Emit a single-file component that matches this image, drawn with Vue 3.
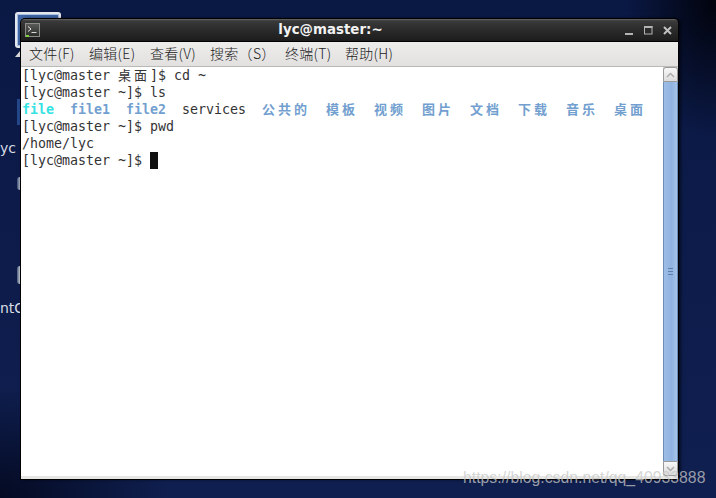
<script setup>
const menus = [
  { t: '文件(F)', w: 60 },
  { t: '编辑(E)', w: 61 },
  { t: '查看(V)', w: 60 },
  { t: '搜索（S）', w: 75 },
  { t: '终端(T)', w: 60 },
  { t: '帮助(H)', w: 60 }
]
</script>

<template>
  <div class="desktop">
    <div class="selected-icon"><div class="selected-inner"></div></div>
    <div class="blob b1"></div>
    <div class="blob b2"></div>
    <div class="blob b3"></div>
    <div class="blob b4"></div>
    <span class="dlabel l1">yc</span>
    <span class="dlabel l2">ntO</span>

    <section class="window">
      <header class="titlebar">
        <svg class="term-icon" width="15" height="14" viewBox="0 0 15 14">
          <defs>
            <linearGradient id="ti" x1="0" y1="0" x2="0" y2="1">
              <stop offset="0" stop-color="#5a5d5a" />
              <stop offset="1" stop-color="#2a2c2a" />
            </linearGradient>
          </defs>
          <rect x="0.5" y="0.5" width="14" height="13" fill="url(#ti)" stroke="#8b8d89" />
          <path d="M3 3.5l3 2.5-3 2.5" fill="none" stroke="#e8e8e8" stroke-width="1" />
          <path d="M6.5 9.5h5" stroke="#d8d8d8" stroke-width="1" />
          <rect x="1" y="12" width="3" height="2" fill="#7fd13b" />
        </svg>
        <span class="title">lyc@master:~</span>
        <div class="controls">
          <svg width="9" height="9" viewBox="0 0 9 9"><rect x="0" y="7" width="8" height="2" fill="#b4b4b4" /></svg>
          <svg width="9" height="9" viewBox="0 0 9 9"><rect x="0.5" y="0.5" width="7.5" height="7.5" fill="none" stroke="#b4b4b4" stroke-width="1" /><rect x="0" y="0" width="8.5" height="2" fill="#b4b4b4" /></svg>
          <svg width="9" height="9" viewBox="0 0 9 9"><path d="M1 1l7 7M8 1L1 8" stroke="#c0c0c0" stroke-width="2" /></svg>
        </div>
      </header>

      <nav class="menubar">
        <span v-for="m in menus" :key="m.t" class="menu" :style="{ width: m.w + 'px' }">{{ m.t }}</span>
      </nav>

      <div class="body">
        <pre class="terminal"><span>[lyc@master <i class="wide">桌面</i>]$ cd ~</span>
<span>[lyc@master ~]$ ls</span>
<b class="cyan">file</b>  <b class="blue">file1</b>  <b class="blue">file2</b>  <span>services</span>  <b class="blue"><i class="wide">公共的</i></b>  <b class="blue"><i class="wide">模板</i></b>  <b class="blue"><i class="wide">视频</i></b>  <b class="blue"><i class="wide">图片</i></b>  <b class="blue"><i class="wide">文档</i></b>  <b class="blue"><i class="wide">下载</i></b>  <b class="blue"><i class="wide">音乐</i></b>  <b class="blue"><i class="wide">桌面</i></b>
<span>[lyc@master ~]$ pwd</span>
<span>/home/lyc</span>
<span>[lyc@master ~]$ <i class="cursor"></i></span></pre>
        <aside class="scrollbar">
          <div class="sb-btn top">
            <svg width="9" height="6" viewBox="0 0 9 6"><path d="M1 5l3.5-3.5L8 5" fill="none" stroke="#a9a9a9" stroke-width="1.3" /></svg>
          </div>
          <div class="thumb"><span class="grip"></span></div>
          <div class="sb-btn bottom">
            <svg width="9" height="6" viewBox="0 0 9 6"><path d="M1 1l3.5 3.5L8 1" fill="none" stroke="#a9a9a9" stroke-width="1.3" /></svg>
          </div>
        </aside>
      </div>
      <div class="footer"></div>
    </section>

    <span class="watermark">https://blog.csdn.net/qq_40933888</span>
  </div>
</template>

<style scoped>
.desktop {
  position: relative;
  width: 716px;
  height: 498px;
  overflow: hidden;
  background:
    radial-gradient(ellipse 90px 140px at 716px 0px, #01030c 0%, rgba(1, 3, 12, 0) 100%),
    radial-gradient(ellipse 170px 110px at 0px 498px, #040a22 0%, rgba(4, 10, 34, 0) 100%),
    linear-gradient(180deg, #0a1844 0%, #0f1f50 100%);
}
.selected-icon {
  position: absolute;
  left: 15px;
  top: 12px;
  width: 46px;
  height: 36px;
  box-sizing: border-box;
  border: 2px solid #e4e8ee;
  border-radius: 3px;
}
.selected-inner {
  width: 100%;
  height: 100%;
  background: #3f65a6;
  border: 1px solid #a9c0e0;
  box-sizing: border-box;
}
.blob {
  position: absolute;
}
.b1 { left: 15px; top: 51px; width: 5px; height: 6px; background: #d8d8d8; clip-path: polygon(100% 0, 100% 100%, 0 100%); }
.b2 { left: 17px; top: 99px; width: 3px; height: 26px; background: #24478a; }
.b3 { left: 17px; top: 177px; width: 3px; height: 13px; border-radius: 3px 0 0 3px; background: linear-gradient(90deg, #3a4a70, #b0b8c8); filter: blur(0.5px); }
.b4 { left: 17px; top: 266px; width: 3px; height: 18px; border-radius: 3px 0 0 3px; background: linear-gradient(90deg, #4a5878, #c4cad4); filter: blur(0.5px); }
.dlabel {
  position: absolute;
  font: 14px "DejaVu Sans", sans-serif;
  color: #d8dce2;
  line-height: 16px;
}
.l1 { left: 0; top: 140px; }
.l2 { left: 0; top: 300px; }

.window {
  position: absolute;
  left: 20px;
  top: 18px;
  width: 659px;
  height: 462px;
  display: flex;
  flex-direction: column;
  box-sizing: border-box;
  background: #000;
  border-radius: 5px 5px 0 0;
  padding: 1px 1px 1px 1px;
  box-shadow: 2px 0 3px rgba(0, 0, 0, 0.5);
}
.titlebar {
  height: 22px;
  flex: none;
  display: flex;
  align-items: center;
  position: relative;
  border-radius: 4px 4px 0 0;
  background: linear-gradient(180deg, #6b6b6b 0%, #3a3a3a 8%, #2e2e2e 40%, #1c1c1c 100%);
}
.term-icon {
  margin-left: 4px;
  flex: none;
}
.title {
  position: absolute;
  left: 0;
  right: 38px;
  text-align: center;
  font: bold 13.4px/22px "DejaVu Sans", sans-serif;
  color: #f2f2f2;
}
.controls {
  margin-left: auto;
  margin-right: 6px;
  display: flex;
  gap: 10px;
  align-items: center;
  position: relative;
}
.menubar {
  height: 25px;
  box-sizing: border-box;
  flex: none;
  display: flex;
  align-items: center;
  padding: 0 0 3px 8px;
  margin-top: 1px;
  background: linear-gradient(180deg, #ededec 0%, #e2e1df 100%);
  border-bottom: 1px solid #b9b9b7;
  font: 300 14px "Noto Sans CJK SC", sans-serif;
  letter-spacing: 0.3px;
  color: #222;
}
.menu {
  flex: none;
  white-space: nowrap;
}
.body {
  flex: 1;
  min-height: 0;
  display: flex;
  background: #fff;
}
.terminal {
  flex: 1;
  margin: 0;
  padding: 0 0 0 1px;
  font: 13.29px/17px "DejaVu Sans Mono", "Noto Sans CJK SC", monospace;
  color: #333;
  white-space: pre;
}
.wide {
  font: inherit;
  font-family: "Noto Sans CJK SC", sans-serif;
  font-size: 13px;
  line-height: 13px;
  letter-spacing: 3px;
  font-style: normal;
}
.blue { color: #729fcf; }
.cyan { color: #34e2e2; }
.cursor {
  display: inline-block;
  width: 8px;
  height: 17px;
  background: #111;
  vertical-align: top;
}
.scrollbar {
  width: 15px;
  flex: none;
  display: flex;
  flex-direction: column;
  background: #cfcfcf;
}
.sb-btn {
  height: 15px;
  flex: none;
  box-sizing: border-box;
  border: 1px solid #9a9a9a;
  background: linear-gradient(180deg, #f8f8f8, #dcdcdc);
  display: flex;
  align-items: center;
  justify-content: center;
}
.sb-btn.top { border-radius: 3px 3px 0 0; }
.sb-btn.bottom { border-radius: 0 0 3px 3px; }
.thumb {
  flex: 1;
  box-sizing: border-box;
  border-left: 1px solid #6c8cb8;
  border-right: 1px solid #6c8cb8;
  background: linear-gradient(90deg, #9cbde6 0%, #8fb3e0 60%, #a6c4e8 100%);
  display: flex;
  align-items: center;
  justify-content: center;
}
.grip {
  width: 5px;
  height: 7px;
  background: repeating-linear-gradient(180deg, #5f7fa8 0 1px, transparent 1px 3px);
}
.footer {
  height: 3px;
  flex: none;
  background: #e6e6e4;
}
.watermark {
  position: absolute;
  left: 463px;
  top: 469px;
  font: 15.8px/18px "Liberation Sans", sans-serif;
  color: rgba(200, 200, 200, 0.75);
  white-space: nowrap;
}
</style>
